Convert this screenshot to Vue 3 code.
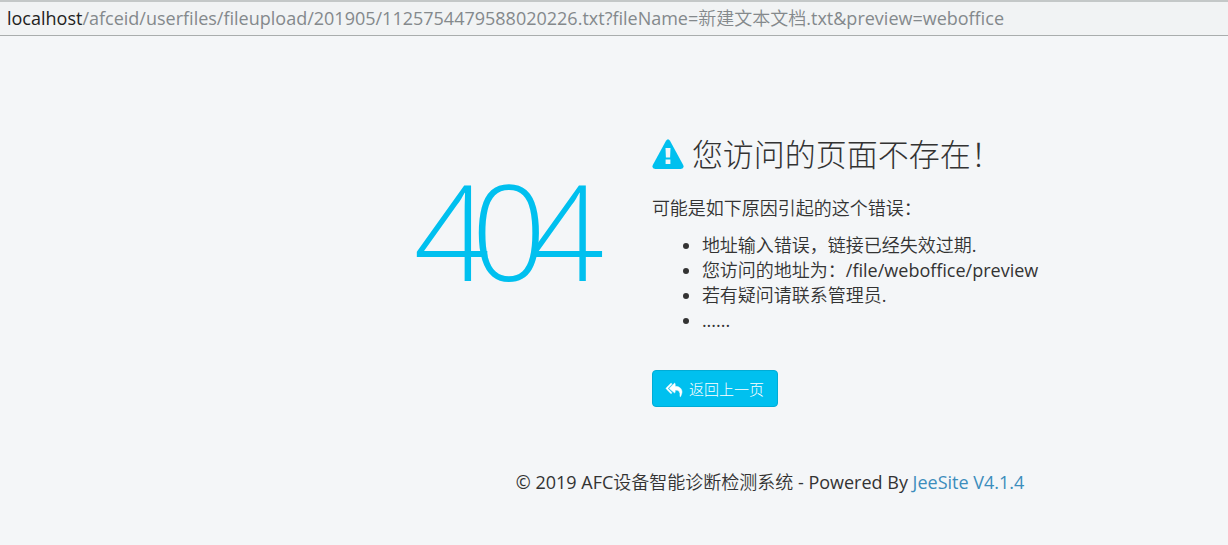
<script setup>
import { ref } from 'vue'

const host = ref('localhost')
const path = ref('/afceid/userfiles/fileupload/201905/1125754479588020226.txt?fileName=新建文本文档.txt&preview=weboffice')

const reasons = ref([
  '地址输入错误，链接已经失效过期.',
  '您访问的地址为：/file/weboffice/preview',
  '若有疑问请联系管理员.',
  '......'
])

function goBack() {
  window.history.back()
}
</script>

<template>
  <div class="page">
    <header class="address-bar">
      <span class="host">{{ host }}</span><span class="path">{{ path }}</span>
    </header>

    <main class="error-page">
      <div class="code">404</div>
      <section class="details">
        <h1>
          <svg class="warning" viewBox="0 0 32 30" aria-hidden="true">
            <path fill="#00c0ef" d="M14 1.8Q16-1.4 18 1.8L31.2 26Q32.6 29.8 28.8 30H3.2Q-.6 29.8.8 26Z" />
            <path fill="#f4f6f8" d="M13.500 9h5l-.4 9.500h-4.200zM13.600 20.500h4.800V25h-4.800z" />
          </svg>
          <span>您访问的页面不存在！</span>
        </h1>
        <p>可能是如下原因引起的这个错误：</p>
        <ul>
          <li v-for="reason in reasons" :key="reason">{{ reason }}</li>
        </ul>
        <button type="button" class="btn" @click="goBack">
          <svg class="reply" viewBox="0 0 1792 1408" aria-hidden="true">
            <path fill="#fff" stroke="#fff" stroke-width="60" d="M640 1082v70q0 42-39 59-13 5-25 5-27 0-45-19L19 685Q0 666 0 640t19-45L531 83q29-31 70-14 39 17 39 59v69L243 595q-19 19-19 45t19 45zm1152-58q0 58-17 133.500t-38.500 138-48 125-40.500 90.500l-20 40q-8 17-28 17-6 0-9-1-25-8-23-34 43-400-106-565-64-71-170.500-110.500T1024 805v251q0 42-39 59-13 5-25 5-27 0-45-19L403 685q-19-19-19-45t19-45L915 83q29-31 70-14 39 17 39 59v262q411 28 599 221 169 173 169 413z" />
          </svg>
          <span>返回上一页</span>
        </button>
      </section>
    </main>

    <footer class="footer">
      © 2019 AFC设备智能诊断检测系统 - Powered By <a href="#">JeeSite V4.1.4</a>
    </footer>
  </div>
</template>

<style>
body {
  margin: 0;
  background-color: #f4f6f8;
}
</style>

<style scoped>
.page {
  color: #333;
  font-family: "Open Sans", "Noto Sans CJK SC DemiLight", "Noto Sans CJK SC", sans-serif;
  font-size: 18px;
  line-height: 25px;
}

.address-bar {
  box-sizing: border-box;
  height: 36px;
  margin-bottom: 96px;
  padding: 4px 7px;
  border-top: 2px solid #c4c8c8;
  border-bottom: 1px solid #a9adad;
  background-color: #f1f3f4;
  white-space: nowrap;
  overflow: hidden;
}

.host {
  color: #222;
}

.path {
  color: #84898c;
}

.error-page {
  display: flex;
  align-items: flex-start;
  gap: 66px;
  padding-left: 33.7%;
}

.code {
  margin-top: 32px;
  color: #00c0ef;
  font-size: 132px;
  font-weight: 300;
  line-height: 132px;
  letter-spacing: -18px;
}

.details {
  white-space: nowrap;
}

h1 {
  display: flex;
  align-items: center;
  gap: 8px;
  margin: 0 0 20px;
  font-family: "Open Sans", "Noto Sans CJK SC", sans-serif;
  font-size: 31px;
  font-weight: 300;
  line-height: 44px;
}

.warning {
  width: 32px;
  height: 30px;
}

p {
  margin: 0 0 12px;
}

ul {
  margin: 0 0 37px;
  padding-left: 50px;
}

.btn {
  display: flex;
  align-items: center;
  gap: 7px;
  height: 37px;
  padding: 0 13px;
  border: 1px solid #00acd6;
  border-radius: 4px;
  background-color: #00c0ef;
  color: #fff;
  font-family: "Open Sans", "Noto Sans CJK SC", sans-serif;
  font-size: 15px;
  font-weight: 300;
  cursor: pointer;
}

.reply {
  width: 16px;
  height: 14px;
  overflow: visible;
}

.footer {
  margin-top: 63px;
  padding-left: 42%;
  white-space: nowrap;
}

.footer a {
  color: #3c8dbc;
  text-decoration: none;
}
</style>
